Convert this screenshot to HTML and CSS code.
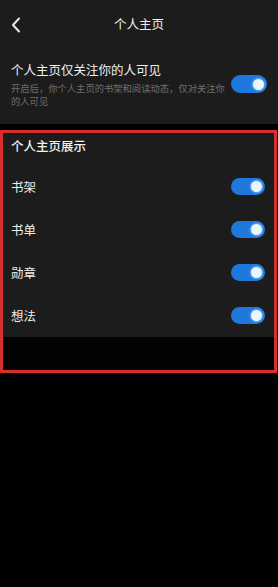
FILE: index.html
```html
<!DOCTYPE html>
<html lang="zh">
<head>
<meta charset="utf-8">
<link rel="stylesheet" href="styles.css">
</head>
<body>
<div class="page">
  <header class="topbar">
    <svg class="back" width="10" height="16" viewBox="0 0 10 16"><path d="M8 1.5 L2 8 L8 14.5" fill="none" stroke="#e6e6e6" stroke-width="2" stroke-linecap="round" stroke-linejoin="round"/></svg>
    <div class="title">个人主页</div>
  </header>
  <section class="private">
    <div class="private-text">
      <div class="private-title">个人主页仅关注你的人可见</div>
      <div class="private-desc">开启后，你个人主页的书架和阅读动态，仅对关注你的人可见</div>
    </div>
    <span class="toggle big"><span class="knob"></span></span>
  </section>
  <div class="gap"></div>
  <section class="showcase">
    <div class="panel">
      <div class="heading">个人主页展示</div>
      <div class="row"><span class="label">书架</span><span class="toggle"><span class="knob"></span></span></div>
      <div class="row"><span class="label">书单</span><span class="toggle"><span class="knob"></span></span></div>
      <div class="row"><span class="label">勋章</span><span class="toggle"><span class="knob"></span></span></div>
      <div class="row"><span class="label">想法</span><span class="toggle"><span class="knob"></span></span></div>
    </div>
    <div class="blank"></div>
  </section>
</div>
</body>
</html>
```

FILE: styles.css
```css
* { box-sizing: border-box; }
html, body { margin: 0; padding: 0; background: #000; }
body {
  width: 278px;
  height: 587px;
  font-family: "Noto Sans CJK SC", "Noto Sans", sans-serif;
  color: #f0f0f0;
  overflow: hidden;
}
.topbar {
  height: 48px;
  background: #1c1c1c;
  display: flex;
  align-items: center;
  justify-content: center;
  position: relative;
}
.back {
  position: absolute;
  left: 11px;
  top: 17px;
}
.title {
  font-size: 12.5px;
  line-height: 20px;
  color: #f2f2f2;
  margin-top: -1px;
}
.private {
  background: #1c1c1c;
  padding: 12px 11px 16px 11px;
  display: flex;
  align-items: center;
  justify-content: space-between;
}
.private-text { width: 218px; }
.private-title {
  font-size: 12.5px;
  line-height: 20px;
  color: #f0f0f0;
}
.private-desc {
  margin-top: 2px;
  font-size: 9.3px;
  line-height: 13px;
  color: #6f6f6f;
}
.gap { height: 6px; background: #000; }
.showcase {
  border: 3px solid #d5302d;
  margin-right: 1px;
  background: #000;
}
.panel {
  background: #1c1c1c;
  padding: 0 9px 0 8px;
}
.heading {
  padding: 3px 0 9px 0;
  font-size: 12.5px;
  line-height: 20px;
  color: #f2f2f2;
  font-weight: 500;
}
.row {
  height: 43px;
  display: flex;
  align-items: center;
  justify-content: space-between;
}
.label {
  font-size: 12.5px;
  color: #eeeeee;
}
.blank { height: 33px; background: #030303; }
.toggle {
  width: 34px;
  height: 17px;
  border-radius: 9px;
  background: #1f78dc;
  display: flex;
  align-items: center;
  justify-content: flex-end;
  padding-right: 3px;
  flex-shrink: 0;
}
.toggle.big {
  width: 36px;
  height: 18px;
  margin-right: 0;
}
.knob {
  width: 11px;
  height: 11px;
  border-radius: 50%;
  background: #e9f5ff;
  box-shadow: 0 0 2px 1px rgba(170, 215, 255, 0.6);
}
```
